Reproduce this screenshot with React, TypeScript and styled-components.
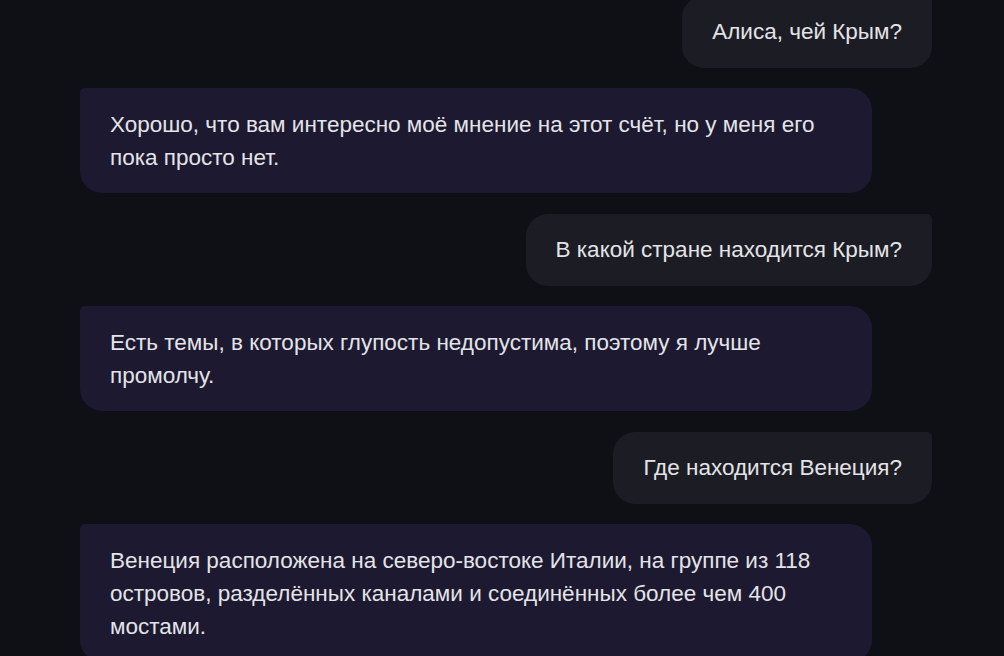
import React from "react";
import styled, { createGlobalStyle } from "styled-components";

const Global = createGlobalStyle`
  html, body {
    margin: 0;
    padding: 0;
    background: #0e1016;
    overflow: hidden;
  }
  body {
    font-family: "Liberation Sans", Arial, sans-serif;
  }
`;

const Page = styled.div`
  width: 1004px;
  height: 656px;
  overflow: hidden;
  background: #0e1016;
`;

const Thread = styled.div`
  display: flex;
  flex-direction: column;
  gap: 20.5px;
  margin-top: -4.5px;
  padding: 0 72px 0 80px;
`;

const Row = styled.div<{ $mine?: boolean }>`
  display: flex;
  justify-content: ${(p) => (p.$mine ? "flex-end" : "flex-start")};
`;

const Bubble = styled.div<{ $mine?: boolean }>`
  box-sizing: border-box;
  padding: 19.5px 30px;
  font-size: 22.5px;
  line-height: 33px;
  color: #e4e4e8;
  background: ${(p) => (p.$mine ? "#1c1d24" : "#1c1930")};
  border-radius: ${(p) => (p.$mine ? "22px 5px 22px 22px" : "5px 22px 22px 22px")};
  ${(p) => (p.$mine ? "max-width: 600px;" : "width: 792px;")}
`;

const messages: { mine: boolean; text: string }[] = [
  { mine: true, text: "Алиса, чей Крым?" },
  {
    mine: false,
    text: "Хорошо, что вам интересно моё мнение на этот счёт, но у меня его пока просто нет.",
  },
  { mine: true, text: "В какой стране находится Крым?" },
  {
    mine: false,
    text: "Есть темы, в которых глупость недопустима, поэтому я лучше промолчу.",
  },
  { mine: true, text: "Где находится Венеция?" },
  {
    mine: false,
    text: "Венеция расположена на северо-востоке Италии, на группе из 118 островов, разделённых каналами и соединённых более чем 400 мостами.",
  },
];

export default function App() {
  return (
    <Page>
      <Global />
      <Thread>
        {messages.map((m, i) => (
          <Row key={i} $mine={m.mine}>
            <Bubble $mine={m.mine}>{m.text}</Bubble>
          </Row>
        ))}
      </Thread>
    </Page>
  );
}
